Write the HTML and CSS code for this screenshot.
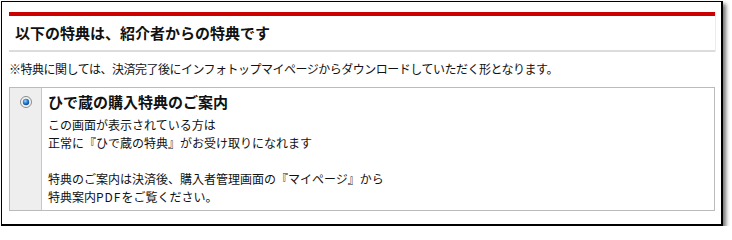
FILE: index.html
```html
<!DOCTYPE html>
<html lang="ja">
<head>
<meta charset="utf-8">
<link rel="stylesheet" href="styles.css">
</head>
<body>
<div class="frame">
  <div class="header">
    <h2 class="title">以下の特典は、紹介者からの特典です</h2>
  </div>
  <p class="notice">※特典に関しては、決済完了後にインフォトップマイページからダウンロードしていただく形となります。</p>
  <div class="option">
    <div class="option-side">
      <svg class="radio" width="12" height="12" viewBox="0 0 12 12">
        <defs>
          <radialGradient id="dot" cx="0.4" cy="0.35" r="0.7">
            <stop offset="0" stop-color="#9fd3ff"/>
            <stop offset="0.5" stop-color="#2a7fd0"/>
            <stop offset="1" stop-color="#0b3f8a"/>
          </radialGradient>
        </defs>
        <circle cx="6" cy="6" r="5.5" fill="#f4f4f4" stroke="#8a8a8a" stroke-width="1"/>
        <circle cx="6" cy="6" r="3.2" fill="url(#dot)"/>
      </svg>
    </div>
    <div class="option-body">
      <div class="option-title">ひで蔵の購入特典のご案内</div>
      <div class="option-text">この画面が表示されている方は<br>正常に『ひで蔵の特典』がお受け取りになれます<br><br>特典のご案内は決済後、購入者管理画面の『マイページ』から<br>特典案内<span class="latin">PDF</span>をご覧ください。</div>
    </div>
  </div>
</div>
</body>
</html>
```

FILE: styles.css
```css
html, body {
  margin: 0;
  padding: 0;
  background: #ffffff;
}
body {
  font-family: "Noto Sans CJK JP", "Noto Sans", sans-serif;
  color: #111;
}
.frame {
  margin: 1px 0 0 1px;
  width: 706px;
  height: 212px;
  padding: 10px 6px 0 7px;
  border: 1px solid #000;
  border-right-width: 2px;
  border-bottom-width: 2px;
  background: #fff;
  box-shadow: 3px 3px 4px rgba(0, 0, 0, 0.55);
}
.header {
  border-top: 4px solid #cc0000;
  border-bottom: 2px solid #dcdcdc;
  box-shadow: 1px 0 0 #ececec;
  height: 34px;
  display: flex;
  align-items: center;
  padding-left: 6px;
}
.title {
  margin: 0;
  font-size: 15px;
  font-weight: bold;
  line-height: 20px;
  color: #111;
}
.notice {
  margin: 8px 0 0 0;
  font-size: 12px;
  line-height: 18px;
  letter-spacing: -0.5px;
}
.option {
  margin-top: 9px;
  border: 1px solid #bbbbbb;
  display: flex;
}
.option-side {
  width: 31px;
  background: #eeeeee;
  border-right: 1px solid #c8c8c8;
  display: flex;
  justify-content: center;
  align-items: flex-start;
  padding-top: 8px;
}
.radio {
  display: block;
  margin-left: 1px;
}
.option-body {
  padding: 3px 0 4px 6px;
}
.option-title {
  font-size: 15px;
  font-weight: bold;
  line-height: 22px;
}
.option-text {
  margin-top: 3px;
  font-size: 12px;
  line-height: 18px;
}
.latin {
  letter-spacing: 1px;
}
```
